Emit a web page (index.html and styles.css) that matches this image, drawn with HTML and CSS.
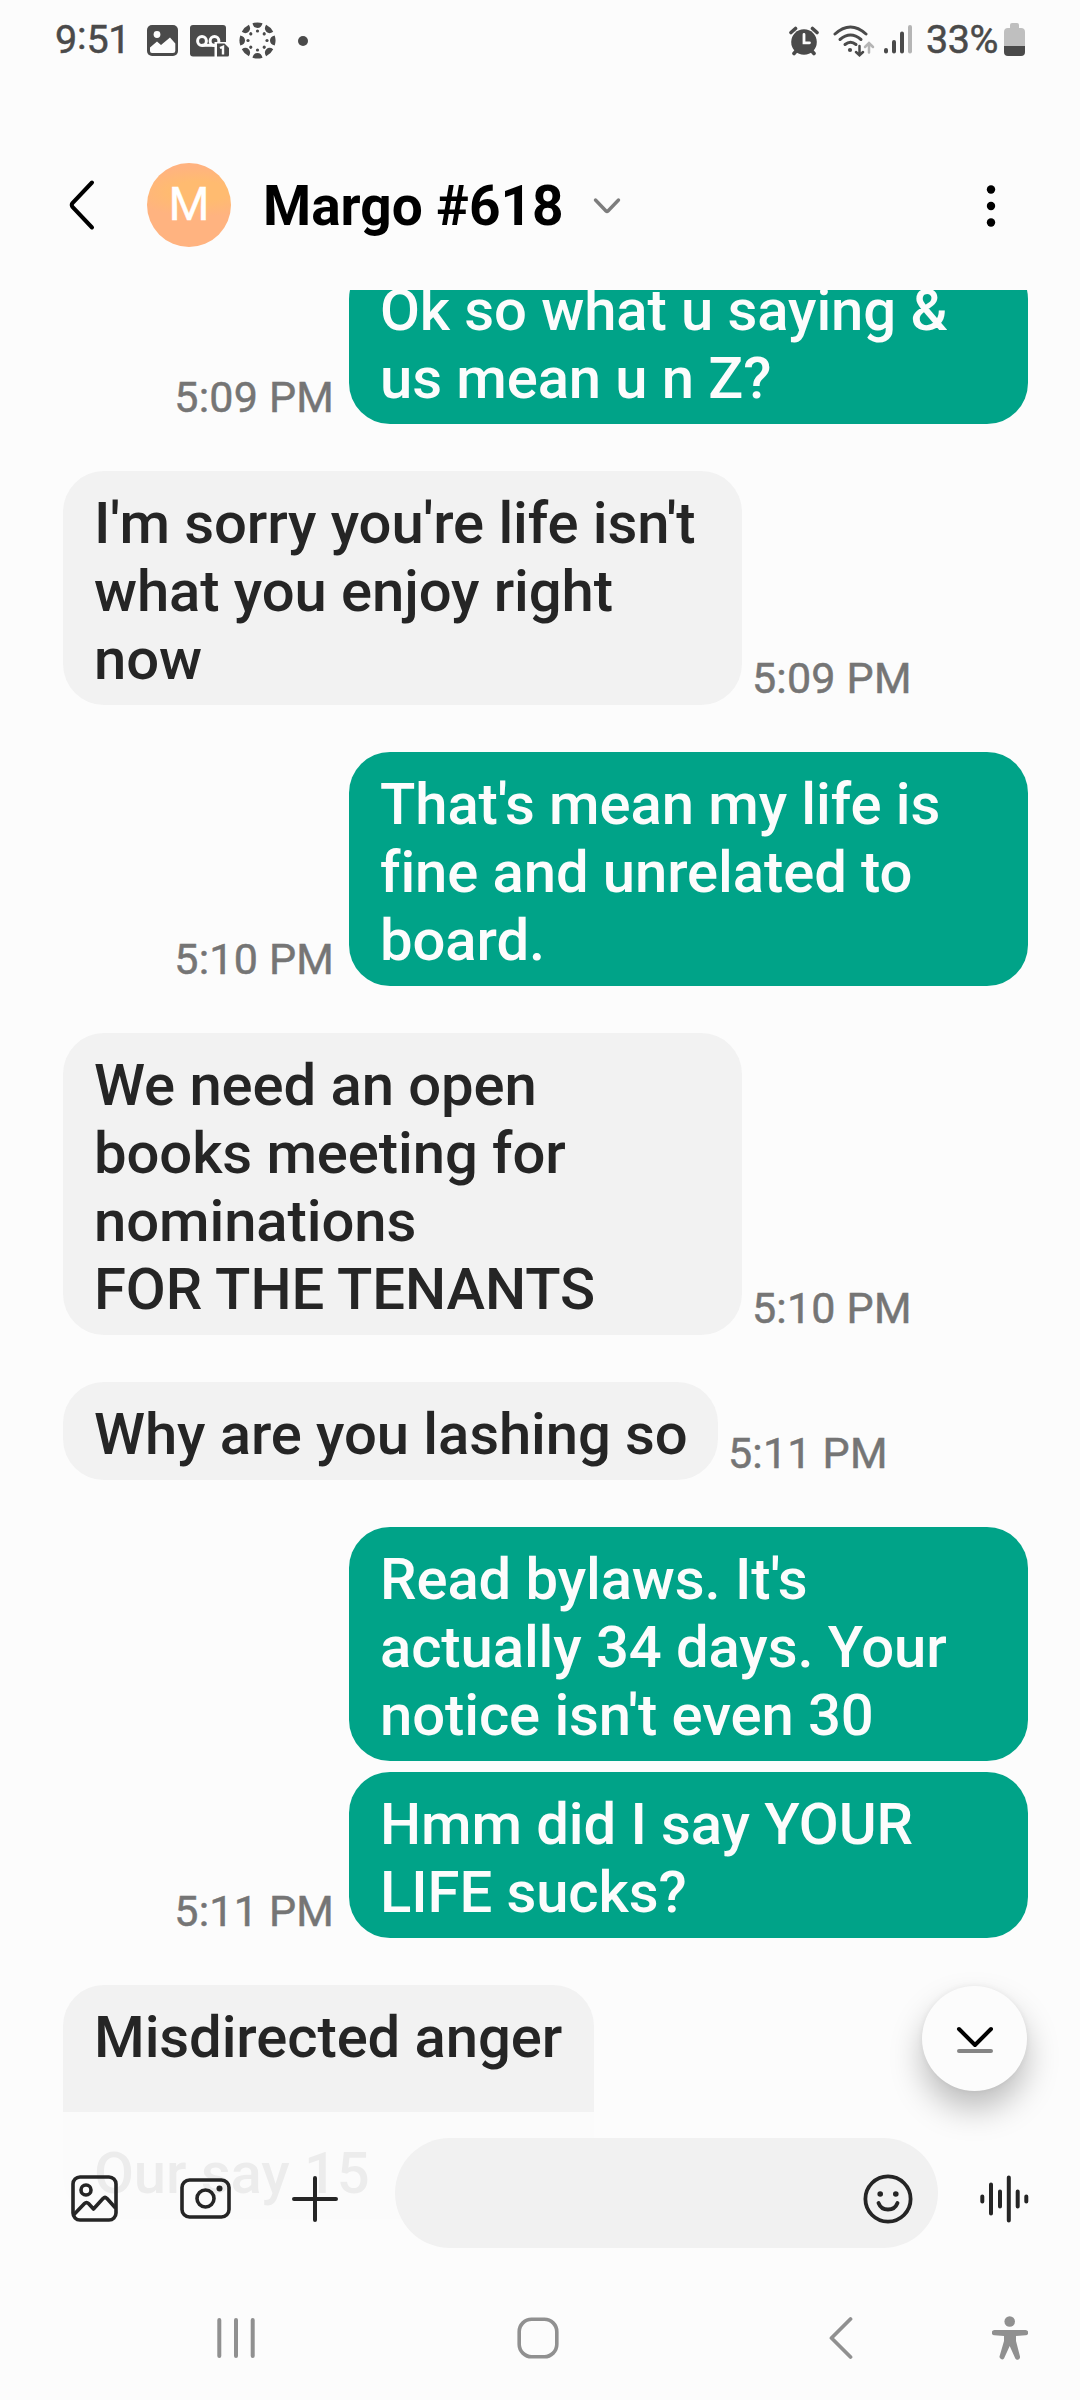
FILE: index.html
```html
<!DOCTYPE html>
<html lang="en">
<head>
<meta charset="utf-8">
<title>Margo #618</title>
<link rel="stylesheet" href="styles.css">
</head>
<body>
<div class="phone">
  <div class="status">
    <span class="clock">9<span class="colon">:</span>51</span>
    <svg class="st-pic" width="31" height="31" viewBox="0 0 31 31"><rect width="31" height="31" rx="5" fill="#4a4a4a"/><circle cx="10" cy="9.5" r="3.4" fill="#fcfcfc"/><path d="M3 22.5L10 16.5L14 20L23 12.5L28.3 18.5V26Q28.3 28 26 28H5Q3 28 3 26Z" fill="#fcfcfc"/></svg>
    <svg class="st-vm" width="40" height="32" viewBox="0 0 40 32"><rect width="36" height="31.5" rx="3" fill="#4a4a4a"/><g fill="none" stroke="#fcfcfc" stroke-width="3"><circle cx="12" cy="16" r="4.4"/><circle cx="24.5" cy="16" r="4.4"/><path d="M12 20.3H25"/></g><path d="M24.5 32V17H36L40 21V32Z" fill="#fcfcfc"/><path d="M27 31.5V18.5H34.500L39 23V30Q39 31.500 37.500 31.500Z" fill="#4a4a4a"/><path d="M30 23L33 21.800V29.500" fill="none" stroke="#fcfcfc" stroke-width="2.400"/></svg>
    <svg class="st-canvas" width="37" height="37" viewBox="-18.500 -18.500 37 37"><defs><g id="lobe"><path d="M-5 -17.200Q0 -18.900 5 -17.200Q4 -12.500 0 -12.500Q-4 -12.500 -5 -17.200Z"/><circle cx="0" cy="-9.500" r="1.600"/></g></defs><g fill="#4a4a4a"><use href="#lobe"/><use href="#lobe" transform="rotate(45)"/><use href="#lobe" transform="rotate(90)"/><use href="#lobe" transform="rotate(135)"/><use href="#lobe" transform="rotate(180)"/><use href="#lobe" transform="rotate(225)"/><use href="#lobe" transform="rotate(270)"/><use href="#lobe" transform="rotate(315)"/></g></svg>
    <span class="more-dot"></span>
    <svg class="st-alarm" width="30" height="30" viewBox="0 0 30 30"><circle cx="15" cy="16" r="12.800" fill="#4a4a4a"/><path d="M2 6.500L6.500 2.500M28 6.500L23.500 2.500M5 27.500L8 24M25 27.500L22 24" stroke="#4a4a4a" stroke-width="3.600" stroke-linecap="round"/><path d="M15 8.500V16.800H20.500" fill="none" stroke="#fcfcfc" stroke-width="2.800" stroke-linecap="round"/></svg>
    <svg class="st-wifi" width="42" height="32" viewBox="0 0 42 32"><g fill="none" stroke="#4a4a4a" stroke-width="3" stroke-linecap="round"><path d="M2 9Q17.500 -5 33 9"/><path d="M7 14.500Q17.500 5.500 28 14.500"/><path d="M12 19.500Q17.500 15 23 19.500"/><path d="M26.500 21V30M23 27L26.500 30.300L30 27" stroke-width="2.500"/><path d="M36 27.500V18.500M32 22L36 18L40 22" stroke="#b5b5b5" stroke-width="2.500"/></g><circle cx="17" cy="25" r="2.100" fill="#4a4a4a"/></svg>
    <svg class="st-signal" width="28" height="31" viewBox="0 0 28 31"><g stroke="#4a4a4a" stroke-width="4" stroke-linecap="round"><path d="M2 26V27.500M10 18V27.500M18 9.500V27.500"/><path d="M26 3V27.500" stroke="#b5b5b5"/></g></svg>
    <span class="pct">33%</span>
    <svg class="st-batt" width="21" height="33" viewBox="0 0 21 33"><path d="M6 5V2Q6 0 8 0H13Q15 0 15 2V5H17Q21 5 21 9V23H0V9Q0 5 4 5Z" fill="#bfbfbf"/><path d="M0 23H21V29Q21 33 17 33H4Q0 33 0 29Z" fill="#4a4a4a"/></svg>
  </div>

  <header class="header">
    <svg class="back" width="30" height="52" viewBox="0 0 30 52"><path d="M25 3.500L5.500 24Q4 26 5.500 28L25 48.500" fill="none" stroke="#000" stroke-width="4" stroke-linecap="round"/></svg>
    <div class="avatar">M</div>
    <h1 class="name">Margo #618</h1>
    <svg class="drop" width="28" height="18" viewBox="0 0 28 18"><path d="M2.500 3L13 14Q14 15 15 14L25.500 3" fill="none" stroke="#7d7d7d" stroke-width="3.400" stroke-linecap="round"/></svg>
    <svg class="kebab" width="10" height="44" viewBox="0 0 10 44"><circle cx="5" cy="5.500" r="4.200"/><circle cx="5" cy="22" r="4.200"/><circle cx="5" cy="38.500" r="4.200"/></svg>
  </header>

  <main class="chat">
    <div class="row sent lead"><time>5:09 PM</time><p class="bubble wide">Ok so what u saying &amp;<br>us mean u n Z?</p></div>
    <div class="row"><p class="bubble wide">I'm sorry you're life isn't<br>what you enjoy right<br>now</p><time>5:09 PM</time></div>
    <div class="row sent"><time>5:10 PM</time><p class="bubble wide">That's mean my life is<br>fine and unrelated to<br>board.</p></div>
    <div class="row"><p class="bubble wide">We need an open<br>books meeting for<br>nominations<br>FOR THE TENANTS</p><time>5:10 PM</time></div>
    <div class="row"><p class="bubble hug">Why are you lashing so</p><time>5:11 PM</time></div>
    <div class="row sent"><p class="bubble wide">Read bylaws. It's<br>actually 34 days. Your<br>notice isn't even 30</p></div>
    <div class="row sent joined"><time>5:11 PM</time><p class="bubble wide">Hmm did I say YOUR<br>LIFE sucks?</p></div>
    <div class="row"><p class="bubble short">Misdirected anger<br><br>Our say 15</p></div>
  </main>

  <button class="jump" aria-label="Jump to latest"><svg width="40" height="30" viewBox="0 0 40 30"><path d="M4 5L20 21L36 5" fill="none" stroke="#000" stroke-width="4" stroke-linecap="round" stroke-linejoin="round"/><path d="M4 27H36" stroke="#858585" stroke-width="4" stroke-linecap="round"/></svg></button>

  <div class="composer">
    <svg class="c-pic" width="47" height="47" viewBox="0 0 47 47"><g fill="none" stroke="#252525" stroke-width="3.600"><rect x="2" y="2" width="43" height="43" rx="7"/><circle cx="15" cy="15" r="5"/><path d="M2.500 40L13.500 28.500Q15.500 26.500 17.500 28.500L22.500 34L32 23.500Q34 21.500 36 23.500L44.500 33" stroke-linejoin="round"/></g></svg>
    <svg class="c-cam" width="51" height="41" viewBox="0 0 51 41"><g fill="none" stroke="#252525" stroke-width="3.600"><rect x="2" y="2" width="47" height="37" rx="7.500"/><circle cx="25.500" cy="20.500" r="8.500"/></g><circle cx="39.500" cy="10.500" r="3" fill="#252525"/></svg>
    <svg class="c-plus" width="46" height="46" viewBox="0 0 46 46"><path d="M23 2V44M2 23H44" stroke="#252525" stroke-width="4" stroke-linecap="round"/></svg>
    <div class="field"><svg width="50" height="50" viewBox="0 0 50 50"><circle cx="25" cy="25" r="22.600" fill="none" stroke="#252525" stroke-width="3.800"/><circle cx="17.200" cy="20" r="2.800" fill="#252525"/><circle cx="32.800" cy="20" r="2.800" fill="#252525"/><path d="M15.500 29Q18 35.500 25 35.500Q32 35.500 34.500 29" fill="none" stroke="#252525" stroke-width="3.800" stroke-linecap="round"/></svg></div>
    <svg class="c-wave" width="50" height="48" viewBox="0 0 50 48"><path d="M3.300 21.500V26.500M12 9.500V38.500M21 16.500V31.500M29.800 2.500V45.500M38.700 16.500V31.500M47.300 21.500V26.500" stroke="#252525" stroke-width="4" stroke-linecap="round"/></svg>
  </div>

  <nav class="nav">
    <svg class="n-recent" width="38" height="42" viewBox="0 0 38 42"><path d="M2.300 3V39M19 3V39M35.700 3V39" stroke="#909090" stroke-width="4" stroke-linecap="round"/></svg>
    <svg class="n-home" width="42" height="42" viewBox="0 0 42 42"><rect x="2.200" y="2.200" width="37.600" height="37.600" rx="12.500" fill="none" stroke="#909090" stroke-width="3.600"/></svg>
    <svg class="n-back" width="24" height="44" viewBox="0 0 24 44"><path d="M21.500 3L2.500 22L21.500 41" fill="none" stroke="#909090" stroke-width="3.800" stroke-linecap="round" stroke-linejoin="round"/></svg>
    <svg class="n-access" width="36" height="46" viewBox="0 0 36 46"><g fill="#909090"><circle cx="17.700" cy="6.500" r="5.300"/><path d="M2.500 15H33.500A2.600 2.600 0 0 1 33.500 20.300L24 21V26L28 41.500A2.600 2.600 0 0 1 23.300 43.500L17.700 31L12 43.500A2.600 2.600 0 0 1 7.500 41.500L12 26V21L2.500 20.300A2.600 2.600 0 0 1 2.500 15Z"/></g></svg>
  </nav>
</div>
</body>
</html>
```
FILE: styles.css
```css
* { box-sizing: border-box; }
body { margin: 0; background: #fcfcfc; font-family: Roboto, sans-serif; }
svg { display: block; flex: none; }
.phone { position: relative; width: 1080px; height: 2400px; overflow: hidden; background: #fcfcfc; display: flex; flex-direction: column; }

.status { flex: none; height: 81px; display: flex; align-items: center; color: #4a4a4a; font-size: 39.500px; -webkit-text-stroke: .5px; line-height: 46px; padding: 0 55px 0 55px; }
.clock { width: 92px; letter-spacing: -0.200px; margin-bottom: 2px; }
.colon { position: relative; top: -4px; }
.st-vm { margin-left: 12px; }
.st-canvas { margin-left: 9px; }
.more-dot { width: 10px; height: 10px; border-radius: 50%; background: #4a4a4a; margin-left: 22px; }
.st-alarm { margin-left: auto; }
.st-wifi { margin-left: 14px; }
.st-signal { margin: 0 0 2px 9px; }
.pct { width: 77px; margin: 0 0 2px 14px; letter-spacing: -0.500px; }
.st-batt { margin: -2px 0 0 1px; }

.header { flex: none; height: 209px; padding: 39px 84px 0 67px; display: flex; align-items: center; }
.avatar { width: 84px; height: 84px; margin-left: 50px; border-radius: 50%; background: radial-gradient(ellipse 70px 25px at 62% 34%, #ffbb70 0, #ffbb70 40%, #ffb380 100%); color: #fff; font-size: 47px; -webkit-text-stroke: .4px; line-height: 82px; text-align: center; }
.name { margin: 2px 0 0 32px; font-size: 55px; font-weight: 700; line-height: 64px; color: #000; white-space: nowrap; }
.drop { margin: 1px 0 0 29px; }
.kebab { margin: 2px 0 0 auto; }

.chat { flex: 1; min-height: 0; overflow: hidden; padding: 0 52px 0 63px; }
.row { display: flex; align-items: flex-end; margin-top: 47px; }
.sent { justify-content: flex-end; }
.lead { margin-top: -32px; }
.joined { margin-top: 11px; }
.bubble { margin: 0; padding: 18px 31px 12px; border-radius: 41px; background: #f2f2f2; color: #252525; font-size: 58px; font-weight: 500; line-height: 68px; letter-spacing: -0.090px; white-space: nowrap; }
.wide { width: 679px; }
.hug { width: 655px; }
.short { width: 531px; }
.sent .bubble { background: #00a388; color: #fcfcfc; }
time { color: #757575; font-size: 43px; letter-spacing: .2px; -webkit-text-stroke: .5px; line-height: 50px; margin: 0 10px 2px; }
.sent time { margin-right: 15px; }

.jump { position: absolute; z-index: 1; left: 922px; top: 1986px; width: 105px; height: 105px; padding: 0; border: 0; border-radius: 50%; background: #fcfcfc; display: flex; align-items: center; justify-content: center; box-shadow: 0 18px 32px rgba(0,0,0,.25), 0 0 6px rgba(0,0,0,.06); }

.composer { position: absolute; left: 0; right: 0; top: 2112px; height: 173px; padding-left: 71px; background: rgba(252,252,252,.93); display: flex; align-items: center; }
.c-cam { margin-left: 62px; }
.c-plus { margin-left: 61px; }
.field { width: 543px; height: 110px; margin: 0 41px 11px 57px; padding: 11px 25px 0 0; border-radius: 55px; background: #f1f1f1; display: flex; align-items: center; justify-content: flex-end; }

.nav { position: absolute; left: 0; right: 0; top: 2285px; height: 115px; padding: 0 0 9px 217px; background: #fcfcfc; display: flex; align-items: center; }
.n-home { margin-left: 262px; }
.n-back { margin-left: 270px; }
.n-access { margin-left: 139px; }
```
